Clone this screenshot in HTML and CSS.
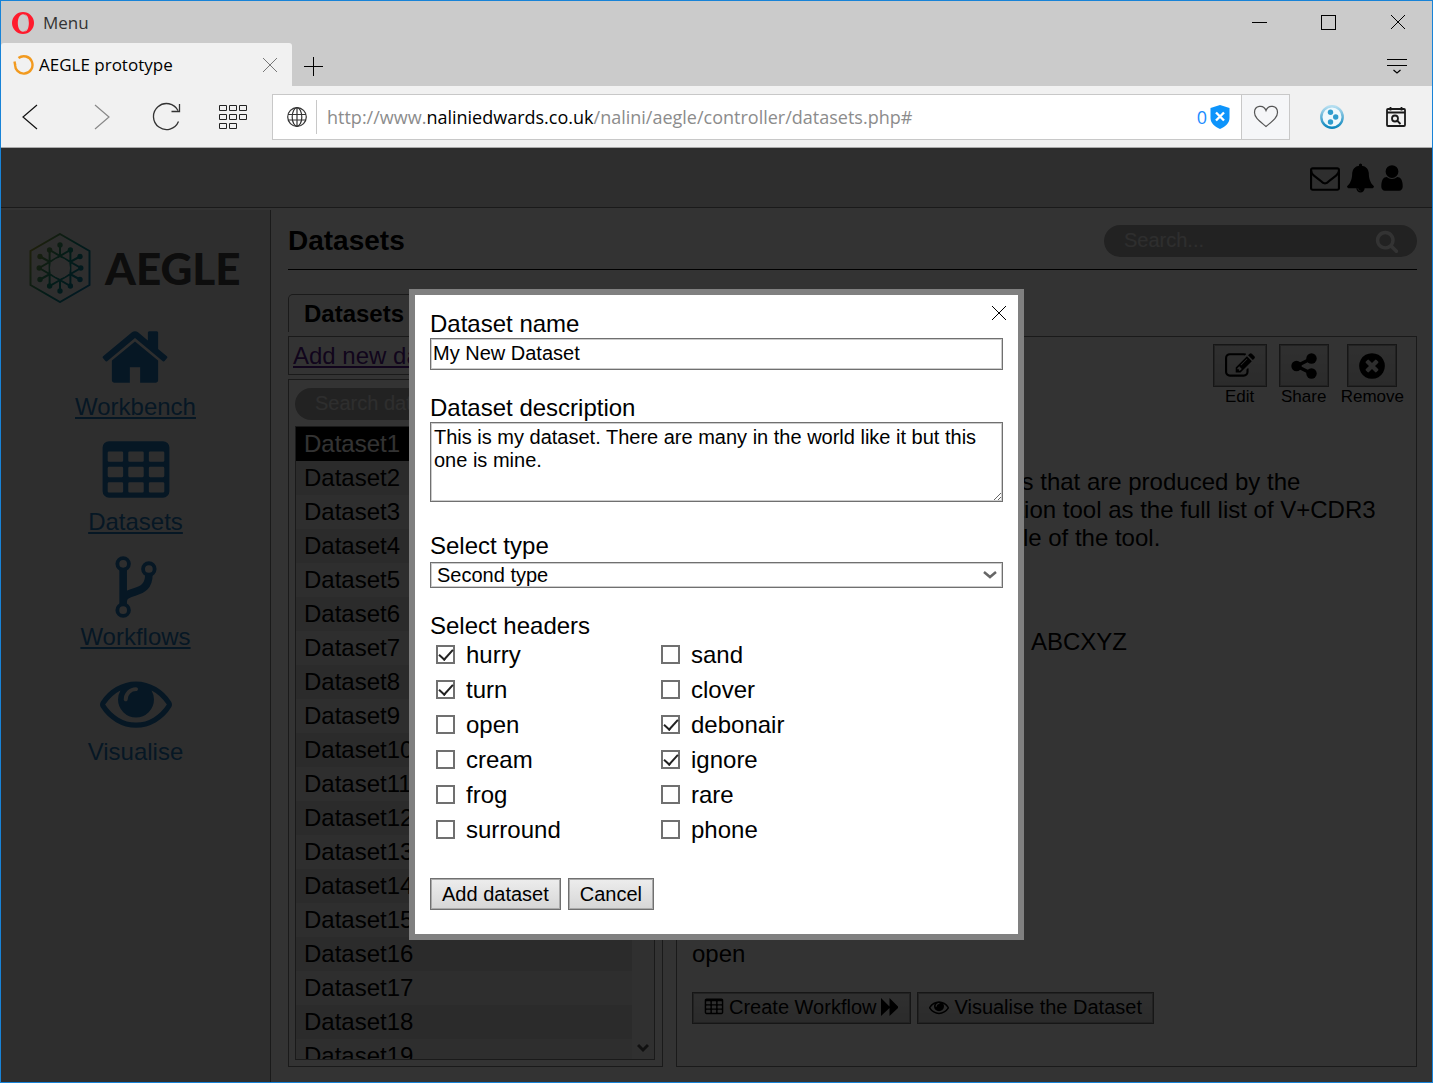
FILE: index.html
```html
<!DOCTYPE html>
<html lang="en">
<head>
<meta charset="utf-8">
<title>AEGLE prototype</title>
<link rel="stylesheet" href="styles.css">
</head>
<body>
<svg class="defs" width="0" height="0" aria-hidden="true">
  <symbol id="i-table" viewBox="0 0 1792 1792"><path fill-rule="evenodd" d="M224 128h1344q66 0 113 47t47 113v1088q0 66-47 113t-113 47H224q-66 0-113-47t-47-113V288q0-66 47-113t113-47zM224 384h320q32 0 32 32v192q0 32-32 32H224q-32 0-32-32V416q0-32 32-32zM736 384h320q32 0 32 32v192q0 32-32 32H736q-32 0-32-32V416q0-32 32-32zM1248 384h320q32 0 32 32v192q0 32-32 32h-320q-32 0-32-32V416q0-32 32-32zM224 768h320q32 0 32 32v192q0 32-32 32H224q-32 0-32-32V800q0-32 32-32zM736 768h320q32 0 32 32v192q0 32-32 32H736q-32 0-32-32V800q0-32 32-32zM1248 768h320q32 0 32 32v192q0 32-32 32h-320q-32 0-32-32V800q0-32 32-32zM224 1152h320q32 0 32 32v192q0 32-32 32H224q-32 0-32-32v-192q0-32 32-32zM736 1152h320q32 0 32 32v192q0 32-32 32H736q-32 0-32-32v-192q0-32 32-32zM1248 1152h320q32 0 32 32v192q0 32-32 32h-320q-32 0-32-32v-192q0-32 32-32z"/></symbol>
  <symbol id="i-eye" viewBox="0 0 1792 1792"><path d="M1664 960q-152-236-381-353 61 104 61 225 0 185-131.500 316.500t-316.500 131.500-316.500-131.500-131.500-316.500q0-121 61-225-229 117-381 353 133 205 333.500 326.500t434.500 121.500 434.500-121.500 333.500-326.500zm-720-384q0-20-14-34t-34-14q-125 0-214.500 89.500t-89.500 214.500q0 20 14 34t34 14 34-14 14-34q0-86 61-147t147-61q20 0 34-14t14-34zm848 384q0 34-20 69-140 230-376.500 368.500t-499.500 138.500-499.500-139-376.500-368q-20-35-20-69t20-69q140-229 376.500-368t499.500-139 499.500 139 376.500 368q20 35 20 69z"/></symbol>
  <symbol id="i-cross" viewBox="0 0 16 16"><path d="M1 1l14 14M15 1L1 15" fill="none" stroke="currentColor"/></symbol>
</svg>

<header class="browser">
  <div class="titlebar">
    <button class="menu" type="button">
      <svg width="22" height="22" viewBox="0 0 22 22"><path fill="#ff1b2d" fill-rule="evenodd" d="M11 0a11 11 0 1 0 0 22a11 11 0 1 0 0-22zM11 2.300c3 0 5.200 3.800 5.200 8.700s-2.200 8.700-5.200 8.700-5.200-3.800-5.200-8.700 2.200-8.700 5.200-8.700z"/><path fill="#cbcbcb" d="M12.500 2.200c3.500.8 4.300 4.800 4.300 8.800s-.8 8-4.300 8.800c2-1.800 3-5 3-8.800s-1-7-3-8.800z"/></svg>
      Menu
    </button>
    <button class="win" type="button" aria-label="Minimise"><svg width="16" height="16"><path d="M0 8.500h15" stroke="#000"/></svg></button>
    <button class="win" type="button" aria-label="Maximise"><svg width="16" height="16"><rect x=".5" y="1.500" width="14" height="14" fill="none" stroke="#000"/></svg></button>
    <button class="win" type="button" aria-label="Close"><svg width="16" height="16"><use href="#i-cross"/></svg></button>
  </div>
  <div class="tabs">
    <div class="tab">
      <svg width="22" height="22" viewBox="0 0 22 22"><path d="M6.500 4A8.700 8.700 0 1 1 3.200 9.500M2.500 7.500l.7 4" fill="none" stroke="#f29a1f" stroke-width="2.400"/></svg>
      <span class="tab-name">AEGLE prototype</span>
      <button class="plain grey" type="button" aria-label="Close tab"><svg width="16" height="16"><use href="#i-cross"/></svg></button>
    </div>
    <button class="plain new-tab" type="button" aria-label="New tab"><svg width="20" height="20"><path d="M0 10.500h19M9.500 1v19" stroke="#000"/></svg></button>
    <button class="plain tab-menu" type="button" aria-label="Tab menu"><svg width="20" height="18"><path d="M0 2.500h20M0 8.500h20M6.500 13l3.500 3 3.500-3" fill="none" stroke="#000" stroke-width="1.200"/></svg></button>
  </div>
  <div class="toolbar">
    <nav class="nav">
      <button class="plain" type="button" aria-label="Back"><svg width="30" height="30" viewBox="0 0 30 30"><path d="M17 3L3 15l14 12" fill="none" stroke="#111" stroke-width="1.200"/></svg></button>
      <button class="plain" type="button" aria-label="Forward"><svg width="30" height="30" viewBox="0 0 30 30"><path d="M9 3l14 12L9 27" fill="none" stroke="#888" stroke-width="1.200"/></svg></button>
      <button class="plain" type="button" aria-label="Reload"><svg width="30" height="30" viewBox="0 0 30 30"><path d="M26.500 19.500A13 13 0 1 1 26 8.500M27.500 2v7.500h-8" fill="none" stroke="#333" stroke-width="1.300"/></svg></button>
      <button class="plain" type="button" aria-label="Speed dial"><svg width="30" height="30" viewBox="0 0 30 30"><path d="M1.500 3.500h7v5h-7zM11.500 3.500h7v5h-7zM21.500 3.500h7v5h-7zM1.500 12.500h7v5h-7zM11.500 12.500h7v5h-7zM21.500 12.500h7v5h-7zM1.500 21.500h7v5h-7zM11.500 21.500h7v5h-7z" fill="none" stroke="#222"/></svg></button>
    </nav>
    <div class="address">
      <svg class="globe" width="20" height="20" viewBox="0 0 20 20"><g fill="none" stroke="#333" stroke-width="1.200"><circle cx="10" cy="10" r="9.300"/><ellipse cx="10" cy="10" rx="4.800" ry="9.300"/><path d="M10 1v18M1 7.500h18M1 13h18"/></g></svg>
      <div class="url">http://www.<b>naliniedwards.co.uk</b>/nalini/aegle/controller/datasets.php#</div>
      <span class="blocked">0</span>
      <svg width="20" height="24" viewBox="0 0 20 24"><path fill="#0d94fb" d="M10 0l9.500 3v10c0 5-4 8.500-9.500 11C4.500 21.500.5 18 .5 13V3z"/><path d="M6 7.500l8 8M14 7.500l-8 8" stroke="#fff" stroke-width="2.400"/></svg>
      <button class="heart" type="button" aria-label="Bookmark"><svg width="26" height="24" viewBox="0 0 26 24"><path d="M13 21.500C7 16.500 1.500 13 1.500 7.500c0-7 9-8.500 11.500-2 2.500-6.500 11.500-5 11.500 2 0 5.500-5.500 9-11.500 14z" fill="none" stroke="#555" stroke-width="1.200"/></svg></button>
    </div>
    <div class="extensions">
      <button class="plain" type="button" aria-label="Extension"><svg width="24" height="24" viewBox="0 0 24 24"><defs><linearGradient id="ring" x2="0" y2="1"><stop offset="0" stop-color="#b5def0"/><stop offset="1" stop-color="#0c86bd"/></linearGradient></defs><circle cx="12" cy="12" r="10.700" fill="#eef8fc" stroke="url(#ring)" stroke-width="2.400"/><g fill="#2e9ccd"><circle cx="10.500" cy="7.300" r="2.700"/><circle cx="15.700" cy="12" r="2.700"/><circle cx="10.500" cy="17" r="2.700"/></g></svg></button>
      <button class="plain" type="button" aria-label="History search"><svg width="20" height="20" viewBox="0 0 20 20"><g fill="none" stroke="#1a1a1a" stroke-width="1.800"><rect x="1" y="2" width="18" height="17" rx="1"/><path d="M1 5.500h18M4.500 0v3.500M15.500 0v3.500"/><circle cx="9" cy="11.500" r="3"/><path d="M11 13.500l3.500 3.500"/></g></svg></button>
    </div>
  </div>
</header>

<div class="page">
  <header class="app-bar">
    <svg width="30" height="30" viewBox="0 0 1792 1792"><path d="M1664 1504v-768q-32 36-69 66-268 206-426 338-51 43-83 67t-86.500 48.500-102.500 24.500h-2q-48 0-102.500-24.500t-86.500-48.500-83-67q-158-132-426-338-37-30-69-66v768q0 13 9.500 22.500t22.500 9.500h1472q13 0 22.500-9.500t9.500-22.500zm0-1051v-24.500l-.5-13-3-12.500-5.500-9-9-7.500-14-2.500h-1472q-13 0-22.500 9.500t-9.500 22.500q0 168 147 284 193 152 401 317 6 5 35 29.500t46 37.500 44.500 31.500 50.500 27.500 43 9h2q20 0 43-9t50.500-27.500 44.500-31.500 46-37.500 35-29.500q208-165 401-317 54-43 100.500-115.500t46.500-131.500zm128-37v1088q0 66-47 113t-113 47h-1472q-66 0-113-47t-47-113v-1088q0-66 47-113t113-47h1472q66 0 113 47t47 113z"/></svg>
    <svg width="29" height="30" viewBox="0 0 1792 1792"><path d="M912 1696q0-16-16-16-59 0-101.500-42.500t-42.500-101.500q0-16-16-16t-16 16q0 73 51.500 124.500t124.500 51.500q16 0 16-16zm816-288q0 52-38 90t-90 38h-448q0 106-75 181t-181 75-181-75-75-181h-448q-52 0-90-38t-38-90q50-42 91-88t85-119.500 74.500-158.500 50-206 19.500-260q0-152 117-282.500t307-158.500q-8-19-8-39 0-40 28-68t68-28 68 28 28 68q0 20-8 39 190 28 307 158.500t117 282.500q0 139 19.500 260t50 206 74.500 158.500 85 119.500 91 88z"/></svg>
    <svg width="22" height="30" viewBox="256 0 1280 1792"><path d="M1536 1399q0 109-62.500 187t-150.500 78h-854q-88 0-150.500-78t-62.500-187q0-85 8.500-160.500t31.500-152 58.500-131 94-89 134.500-34.500q131 128 313 128t313-128q76 0 134.500 34.500t94 89 58.500 131 31.500 152 8.500 160.500zm-256-887q0 159-112.500 271.500t-271.500 112.500-271.500-112.500-112.500-271.500 112.500-271.500 271.500-112.500 271.500 112.500 112.500 271.500z"/></svg>
  </header>
  <div class="body">
    <aside class="sidebar">
      <div class="logo">
        <svg width="62" height="70" viewBox="-31 -35 62 70"><defs><linearGradient id="hex" gradientUnits="userSpaceOnUse" x1="-28" y1="-16" x2="28" y2="16"><stop offset="0" stop-color="#8f9a3c"/><stop offset=".5" stop-color="#108a78"/><stop offset="1" stop-color="#0a78a8"/></linearGradient></defs><g fill="none" stroke="url(#hex)" stroke-width="2"><path d="M0-34L29.500-17V17L0 34-29.500 17V-17z"/><path d="M10.400-18V18L-20.800 0zM-10.400-18V18L20.800 0z"/><path d="M0-23V-11M0 23V11M20-11.500L10-6M20 11.500L10 6M-20-11.500L-10-6M-20 11.500L-10 6"/></g><g fill="url(#hex)"><circle r="2.700" cy="-23"/><circle r="2.700" cy="23"/><circle r="2.700" cx="20" cy="-11.500"/><circle r="2.700" cx="20" cy="11.500"/><circle r="2.700" cx="-20" cy="-11.500"/><circle r="2.700" cx="-20" cy="11.500"/><circle r="2.700" cx="10.400" cy="-18"/><circle r="2.700" cx="10.400" cy="18"/><circle r="2.700" cx="-10.400" cy="-18"/><circle r="2.700" cx="-10.400" cy="18"/><circle r="2.700" cx="20.800"/><circle r="2.700" cx="-20.800"/></g><circle r="10" fill="#e6e6e6"/></svg>
        <span>AEGLE</span>
      </div>
      <nav class="side-nav">
        <a href="#"><svg width="72" height="72" viewBox="0 0 1792 1792"><path d="M1472 992v480q0 26-19 45t-45 19h-384v-384h-256v384h-384q-26 0-45-19t-19-45v-480q0-1 .5-3t.5-3l575-474 575 474q1 2 1 6zm223-69l-62 74q-8 9-21 11h-3q-13 0-21-7l-692-577-692 577q-12 8-24 7-13-2-21-11l-62-74q-8-10-7-23.500t11-21.500l719-599q32-26 76-26t76 26l244 204v-195q0-14 9-23t23-9h192q14 0 23 9t9 23v408l219 182q10 8 11 21.500t-7 23.500z"/></svg>Workbench</a>
        <a href="#"><svg width="72" height="72"><use href="#i-table"/></svg>Datasets</a>
        <a href="#"><svg width="72" height="72" viewBox="0 0 1792 1792"><g fill="none" stroke="currentColor"><g stroke-width="96"><circle cx="576" cy="320" r="144"/><circle cx="576" cy="1472" r="144"/><circle cx="1216" cy="448" r="144"/></g><path stroke-width="190" d="M576 470V1325M1216 590C1216 880 1060 960 860 1020C700 1068 576 1110 576 1260"/></g></svg>Workflows</a>
        <a href="#" class="no-line"><svg width="72" height="72"><use href="#i-eye"/></svg>Visualise</a>
      </nav>
    </aside>
    <main class="main">
      <div class="title-row">
        <h1>Datasets</h1>
        <div class="pill">
          <input type="search" placeholder="Search..." aria-label="Search">
          <svg width="24" height="24" viewBox="0 0 1792 1792" fill="#fff"><path d="M1216 832q0-185-131.500-316.500t-316.500-131.500-316.500 131.500-131.500 316.500 131.500 316.500 316.500 131.500 316.500-131.500 131.500-316.500zm512 832q0 52-38 90t-90 38q-54 0-90-38l-343-342q-179 124-399 124-143 0-273.500-55.500t-225-150-150-225-55.500-273.500 55.500-273.500 150-225 225-150 273.500-55.500 273.500 55.500 225 150 150 225 55.500 273.500q0 220-124 399l343 343q37 37 37 90z"/></svg>
        </div>
      </div>
      <h2 class="panel-tab">Datasets</h2>
      <div class="panels">
        <section class="left">
          <div class="add-box"><a href="#">Add new dataset</a></div>
          <div class="list-box">
            <div class="pill"><input type="search" placeholder="Search datasets..." aria-label="Search datasets"></div>
            <div class="list">
              <ul>
                <li class="current">Dataset1</li><li>Dataset2</li><li>Dataset3</li><li>Dataset4</li><li>Dataset5</li><li>Dataset6</li><li>Dataset7</li><li>Dataset8</li><li>Dataset9</li><li>Dataset10</li><li>Dataset11</li><li>Dataset12</li><li>Dataset13</li><li>Dataset14</li><li>Dataset15</li><li>Dataset16</li><li>Dataset17</li><li>Dataset18</li><li>Dataset19</li>
              </ul>
              <div class="scroll"><svg width="12" height="10"><path d="M1 2l5 5 5-5" fill="none" stroke="#555" stroke-width="3"/></svg></div>
            </div>
          </div>
        </section>
        <section class="detail">
          <div class="actions">
            <label><button class="btn icon" type="button"><svg width="30" height="30" viewBox="0 0 1792 1792"><path d="M888 1184l116-116-152-152-116 116v56h96v96h56zm440-720q-16-16-33 1l-350 350q-17 17-1 33t33-1l350-350q17-17 1-33zm80 594v190q0 119-84.500 203.500t-203.500 84.500h-832q-119 0-203.500-84.500t-84.500-203.500v-832q0-119 84.500-203.500t203.500-84.500h832q63 0 117 25 15 7 18 23 3 17-9 29l-49 49q-14 14-32 8-23-6-45-6h-832q-66 0-113 47t-47 113v832q0 66 47 113t113 47h832q66 0 113-47t47-113v-126q0-13 9-22l64-64q15-15 35-7t20 29zm-96-738l288 288-672 672h-288v-288zm444 132l-92 92-288-288 92-92q28-28 68-28t68 28l152 152q28 28 28 68t-28 68z"/></svg></button>Edit</label>
            <label><button class="btn icon" type="button"><svg width="26" height="30" viewBox="0 0 26 30"><circle cx="5.500" cy="15" r="5.200"/><circle cx="20.500" cy="7.500" r="5.200"/><circle cx="20.500" cy="22.500" r="5.200"/><path d="M20.500 7.500L5.500 15l15 7.500" fill="none" stroke="#000" stroke-width="3.400"/></svg></button>Share</label>
            <label><button class="btn icon" type="button"><svg width="26" height="30" viewBox="128 0 1536 1792"><path d="M1277 1122q0-26-19-45l-181-181 181-181q19-19 19-45 0-27-19-46l-90-90q-19-19-46-19-26 0-45 19l-181 181-181-181q-19-19-45-19-27 0-46 19l-90 90q-19 19-19 46 0 26 19 45l181 181-181 181q-19 19-19 45 0 27 19 46l90 90q19 19 46 19 26 0 45-19l181-181 181 181q19 19 45 19 27 0 46-19l90-90q19-19 19-46zm387-226q0 209-103 385.500t-279.500 279.500-385.500 103-385.500-103-279.500-279.500-103-385.500 103-385.500 279.500-279.500 385.500-103 385.500 103 279.500 279.500 103 385.500z"/></svg></button>Remove</label>
          </div>
          <p class="about">A dataset with all the clonotypes that are produced by the<br>main immune repertoire extraction tool as the full list of V+CDR3<br>clonotypes seen in the output file of the tool.</p>
          <p class="code">ABCXYZ</p>
          <div class="foot">
            <p>open</p>
            <div class="btn-row">
              <button class="btn" type="button"><svg width="20" height="20"><use href="#i-table"/></svg>Create Workflow<svg width="18" height="20" viewBox="0 0 18 20"><path d="M0 1l8.500 8.500V1L17 9.500V11l-8.500 8V11L0 19z"/></svg></button>
              <button class="btn" type="button"><svg width="20" height="20"><use href="#i-eye"/></svg>Visualise the Dataset</button>
            </div>
          </div>
        </section>
      </div>
    </main>
  </div>

  <div class="overlay">
    <form class="modal" role="dialog" aria-label="Add dataset">
      <button class="plain close" type="button" aria-label="Close dialog"><svg width="16" height="16"><use href="#i-cross"/></svg></button>
      <div class="field">
        <label for="name">Dataset name</label>
        <input id="name" class="text" type="text" value="My New Dataset">
      </div>
      <div class="field">
        <label for="desc">Dataset description</label>
        <textarea id="desc" class="text">This is my dataset. There are many in the world like it but this one is mine.</textarea>
      </div>
      <div class="field type">
        <label for="type">Select type</label>
        <div class="select">
          <select id="type"><option>First type</option><option selected>Second type</option></select>
          <svg width="14" height="10"><path d="M1 2l6 5 6-5" fill="none" stroke="#666" stroke-width="2.500"/></svg>
        </div>
      </div>
      <fieldset>
        <legend>Select headers</legend>
        <div class="checks">
          <label><input type="checkbox" checked>hurry</label>
          <label><input type="checkbox">sand</label>
          <label><input type="checkbox" checked>turn</label>
          <label><input type="checkbox">clover</label>
          <label><input type="checkbox">open</label>
          <label><input type="checkbox" checked>debonair</label>
          <label><input type="checkbox">cream</label>
          <label><input type="checkbox" checked>ignore</label>
          <label><input type="checkbox">frog</label>
          <label><input type="checkbox">rare</label>
          <label><input type="checkbox">surround</label>
          <label><input type="checkbox">phone</label>
        </div>
      </fieldset>
      <div class="btn-row">
        <button class="btn" type="button">Add dataset</button>
        <button class="btn" type="button">Cancel</button>
      </div>
    </form>
  </div>
</div>
</body>
</html>
```
FILE: styles.css
```css
* { box-sizing: border-box; }

body {
  margin: 0;
  height: 100vh;
  display: flex;
  flex-direction: column;
  border: 1px solid #1883d7;
  background: #fff;
  color: #000;
  font: 24px/28px "Liberation Sans", Arial, sans-serif;
  overflow: hidden;
}

h1, h2, p, ul { margin: 0; padding: 0; }
svg { display: block; flex: none; }
button, input, select, textarea { font: inherit; color: inherit; margin: 0; }
.defs { position: absolute; }

.plain {
  display: flex;
  padding: 0;
  border: 0;
  background: none;
}

/* Browser window */
.browser {
  flex: none;
  background: #cbcbcb;
  font: 17px/24px "Open Sans", "Noto Sans", sans-serif;
}

.titlebar { display: flex; height: 42px; }

.menu {
  display: flex;
  align-items: center;
  gap: 9px;
  margin-right: auto;
  padding: 1px 11px 0;
  border: 0;
  background: none;
  color: #333;
}

.win {
  display: flex;
  align-items: center;
  justify-content: center;
  width: 69px;
  padding: 0;
  border: 0;
  background: none;
  color: #000;
}

.tabs {
  display: flex;
  align-items: center;
  height: 43px;
  padding-right: 25px;
}

.tab {
  display: flex;
  align-items: center;
  align-self: stretch;
  gap: 5px;
  width: 291px;
  padding: 1px 14px 0 11px;
  border-radius: 3px 3px 0 0;
  background: #f1f1f1;
}

.tab-name { flex: 1; }
.grey { color: #777; }
.new-tab { margin: 2px 0 0 12px; }
.tab-menu { margin: 2px 0 0 auto; }

.toolbar {
  display: flex;
  align-items: center;
  height: 62px;
  border-bottom: 1px solid #aaa;
  background: #f1f1f1;
}

.nav {
  display: flex;
  gap: 36px;
  padding: 0 24px 0 19px;
}

.address {
  flex: 1;
  display: flex;
  align-items: center;
  height: 46px;
  border: 1px solid #c8c8c8;
  background: #fff;
  font-size: 18px;
}

.globe { margin: 0 9px 0 14px; }

.url {
  flex: 1;
  padding-left: 10px;
  border-left: 1px solid #c8c8c8;
  color: #8c8c8c;
  line-height: 34px;
}

.url b { color: #000; font-weight: 400; }
.blocked { color: #1a8cff; margin-right: 3px; }

.heart {
  display: flex;
  align-items: center;
  justify-content: center;
  align-self: stretch;
  width: 48px;
  margin-left: 11px;
  padding: 0;
  border: 0;
  border-left: 1px solid #c8c8c8;
  background: #f5f6f8;
}

.extensions {
  display: flex;
  align-items: center;
  gap: 42px;
  padding: 0 26px 0 30px;
}

/* Web application */
.page {
  position: relative;
  flex: 1;
  min-height: 0;
  display: flex;
  flex-direction: column;
}

.app-bar {
  display: flex;
  align-items: center;
  justify-content: flex-end;
  gap: 6px;
  height: 60px;
  padding-right: 29px;
  border-bottom: 1px solid #808080;
  background: #e6e6e6;
}

.body {
  flex: 1;
  min-height: 0;
  display: flex;
  margin-top: 2px;
}

.sidebar {
  flex: none;
  width: 270px;
  padding-top: 23px;
  border-right: 1px solid #808080;
  background: #e6e6e6;
}

.logo {
  display: flex;
  align-items: center;
  gap: 14px;
  height: 70px;
  padding-left: 28px;
  color: #444;
  font: 900 44px/68px Lato, sans-serif;
}

.side-nav {
  display: grid;
  gap: 15px;
  justify-items: center;
  margin-top: 18px;
}

.side-nav a {
  display: flex;
  flex-direction: column;
  align-items: center;
  color: #1f74b5;
  fill: #1f74b5;
}

.side-nav .no-line { text-decoration: none; }

.main {
  flex: 1;
  min-width: 0;
  display: flex;
  flex-direction: column;
  padding: 15px 15px 15px 17px;
}

.title-row {
  display: flex;
  justify-content: space-between;
  align-items: center;
  padding-bottom: 12px;
  border-bottom: 1px solid #000;
}

h1 { font-size: 28px; line-height: 32px; }

.pill {
  display: flex;
  align-items: center;
  width: 313px;
  height: 32px;
  padding: 0 18px 0 20px;
  border-radius: 16px;
  background: #aaa;
}

.pill input {
  flex: 1;
  min-width: 0;
  padding: 0 0 2px;
  border: 0;
  outline: 0;
  background: none;
  font-size: 20px;
}

.pill input::placeholder { color: #e6e6e6; }

.panel-tab {
  align-self: flex-start;
  margin-top: 24px;
  padding: 5px 15px 4px;
  border: 1px solid #808080;
  border-bottom: 0;
  border-radius: 5px 5px 0 0;
  font-size: 24px;
}

.panels {
  flex: 1;
  min-height: 0;
  display: grid;
  grid-template-columns: minmax(0, 375px) minmax(0, 1fr);
  grid-template-rows: minmax(0, 1fr);
  gap: 13px;
  margin-top: 4px;
}

.left {
  display: flex;
  flex-direction: column;
  gap: 4px;
}

.add-box {
  padding: 5px 4px 4px;
  border: 1px solid #808080;
}

.add-box a { color: #551a8b; }

.list-box {
  flex: 1;
  min-height: 0;
  display: flex;
  flex-direction: column;
  gap: 6px;
  padding: 8px 7px 6px 6px;
  border: 1px solid #808080;
}

.list {
  flex: 1;
  min-height: 0;
  display: flex;
  border: 1px solid #808080;
}

.list ul {
  flex: 1;
  overflow: hidden;
  list-style: none;
}

.list li { padding: 3px 8px; background: #e6e6e6; }
.list li:nth-child(even) { background: #d8d8d8; }
.list .current { background: #000; color: #fff; }

.scroll {
  display: flex;
  align-items: flex-end;
  justify-content: center;
  width: 22px;
  padding-bottom: 6px;
  background: #f0f0f0;
}

.detail {
  display: flex;
  flex-direction: column;
  padding: 7px 12px 42px 15px;
  border: 1px solid #808080;
}

.actions {
  display: flex;
  justify-content: flex-end;
  gap: 12px;
}

.actions label {
  display: flex;
  flex-direction: column;
  align-items: center;
  font-size: 17px;
  line-height: 20px;
}

.about { margin-top: 61px; white-space: nowrap; }
.code { margin-top: 76px; padding-left: 339px; }

.foot { margin-top: auto; }
.foot .btn-row { gap: 6px; margin-top: 24px; }
.foot .btn { padding-bottom: 2px; }

.btn-row { display: flex; gap: 7px; }

.btn {
  display: flex;
  align-items: center;
  gap: 5px;
  height: 32px;
  padding: 0 11px;
  border: 1px solid #707070;
  border-radius: 0;
  background: linear-gradient(#ededed, #d6d6d6);
  box-shadow: inset 0 0 0 1px #aaa;
  font-size: 20px;
  line-height: 24px;
}

.icon { height: 43px; }

/* Dialog */
.overlay {
  position: absolute;
  inset: 0;
  display: flex;
  align-items: center;
  justify-content: center;
  padding-bottom: 2px;
  background: rgba(0, 0, 0, 0.8);
}

.modal {
  position: relative;
  width: 615px;
  max-width: 100%;
  padding: 15px 15px 24px;
  border: 6px solid #808080;
  background: #fff;
}

.close {
  position: absolute;
  top: 10px;
  right: 11px;
}

.field {
  display: flex;
  flex-direction: column;
  margin-bottom: 24px;
}

.text {
  padding: 0 2px;
  border: 1px solid #707070;
  border-radius: 0;
  background: #fff;
  box-shadow: inset 0 0 0 1px #ccc;
  font-size: 20px;
}

input.text { height: 32px; }

textarea.text {
  height: 80px;
  padding: 3px;
  line-height: 23px;
  resize: both;
}

.field.type { margin-top: 30px; }

.select {
  display: grid;
  align-items: center;
  margin-top: 2px;
}

.select > * { grid-area: 1 / 1; }

.select select {
  height: 26px;
  padding: 0 6px;
  border: 1px solid #707070;
  border-radius: 0;
  box-shadow: inset 0 0 0 1px #ccc;
  background: #fff;
  appearance: none;
  font-size: 20px;
  line-height: 24px;
}

.select svg {
  justify-self: end;
  margin-right: 6px;
  pointer-events: none;
}

fieldset { margin: 0; padding: 0; border: 0; }
legend { padding: 0; }

.checks {
  display: grid;
  grid-template-columns: 225px 225px;
  row-gap: 7px;
  padding: 1px 0 34px 6px;
}

.checks label {
  display: flex;
  align-items: center;
  gap: 11px;
}

.checks input {
  display: grid;
  place-items: center;
  width: 19px;
  height: 19px;
  border: 2px solid #707070;
  background: #fff;
  appearance: none;
}

.checks input:checked::after {
  content: "";
  width: 12px;
  height: 6px;
  margin-top: -4px;
  border: solid #222;
  border-width: 0 0 2px 2px;
  transform: rotate(-48deg);
}
```
